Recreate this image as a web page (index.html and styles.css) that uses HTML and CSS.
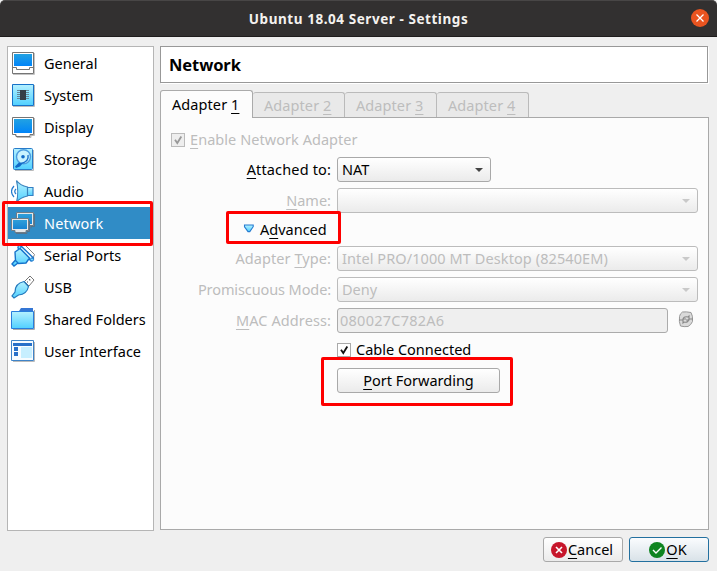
FILE: index.html
```html
<!DOCTYPE html>
<html lang="en">
<head>
<meta charset="utf-8">
<title>Ubuntu 18.04 Server - Settings</title>
<link rel="stylesheet" href="styles.css">
</head>
<body>
<svg class="defs" width="0" height="0" aria-hidden="true">
  <defs>
    <linearGradient id="screen" x1="0" y1="0" x2="0" y2="1"><stop offset="0" stop-color="#22a2e2"/><stop offset="1" stop-color="#0084f8"/></linearGradient>
    <linearGradient id="ice" x1="0" y1="0" x2="0" y2="1"><stop offset="0" stop-color="#b5f1ff"/><stop offset="1" stop-color="#50d0ff"/></linearGradient>
    <linearGradient id="monitor" x1="0" y1="0" x2="0" y2="1"><stop offset="0" stop-color="#2f9fd9"/><stop offset="1" stop-color="#1683d2"/></linearGradient>
  </defs>
</svg>
<div class="window">
  <header class="titlebar">
    <span class="title">Ubuntu 18.04 Server - Settings</span>
    <span class="close"><svg width="18" height="18" viewBox="0 0 18 18"><circle cx="9" cy="9" r="9" fill="#e95420"/><path d="M5.500 5.500l7 7M12.500 5.500l-7 7" stroke="#fff" stroke-width="1.300"/></svg></span>
  </header>
  <div class="content">
    <nav class="sidebar">
      <div class="item general"><svg viewBox="0 0 24 24"><path d="M2 23.500h21.500V2" fill="none" stroke="#c4c4c4"/><path d="M1.500 1.500h21v21h-21z" fill="#fff" stroke="#757575"/><path d="M3 3h18v12H3z" fill="url(#screen)"/><path d="M2 16.500h3.500v2h13v-2H22" fill="none" stroke="#757575"/></svg><span>General</span></div>
      <div class="item system"><svg viewBox="0 0 24 24"><path d="M2 23.500h21.500V2" fill="none" stroke="#bbb"/><path d="M1.500 1.500h21v21h-21z" fill="url(#ice)" stroke="#1672c9"/><path d="M6 7.500h12M6 9.500h12M6 11.500h12M6 13.500h12M6 15.500h12" stroke="#65859a"/><path d="M9 7h6v10H9z" fill="#353d47"/></svg><span>System</span></div>
      <div class="item display"><svg viewBox="0 0 24 24"><path d="M4 20.500h2v2h14v-2h3.500V3" fill="none" stroke="#bbb"/><path d="M1.500 2.500h21v17H19v2H5v-2H1.500z" fill="#fff" stroke="#757575"/><path d="M3 4h18v14H3z" fill="url(#screen)"/></svg><span>Display</span></div>
      <div class="item storage"><svg viewBox="0 0 24 24"><path d="M4 23.500h18.500V3" fill="none" stroke="#bbb"/><rect x="2.500" y="1.500" width="19" height="21" rx="1" fill="url(#ice)" stroke="#287bc9"/><circle cx="12.500" cy="9.800" r="7" fill="#c9f3ff" stroke="#4d9ddf" stroke-width="1.400"/><circle cx="12" cy="9.800" r="1.800" fill="#116ac8"/><path d="M17 8c1 5-3 7.500-7 8.500" fill="none" stroke="#1c73cc" stroke-width="1.400"/><path d="M4 19.500l4-4 3.500 1-2.500 3-4 1.500z" fill="#116ac8"/></svg><span>Storage</span></div>
      <div class="item audio"><svg viewBox="0 0 24 24"><path d="M15 8.500h7v8h-7z" fill="url(#ice)" stroke="#3380c5" stroke-width="1.200"/><path d="M5.500 1.500Q9 6.500 16.500 8v9Q9 18.500 5.500 23.500c1.500-6 1.500-16 0-22z" fill="url(#ice)" stroke="#3b83bd" stroke-width="1.200"/><path d="M3 7Q-2 12.500 3 18M5 10q-2.500 2.500 0 5" fill="none" stroke="#247bcf" stroke-width="1.200"/></svg><span>Audio</span></div>
      <div class="item network selected"><svg viewBox="0 0 24 24"><path d="M23.500 3v12.500H20v2" fill="none" stroke="#55738a"/><path d="M5.500 1.500h17v13H19v2h-8v-2H5.500z" fill="#e4e8ea" stroke="#6f7c86"/><path d="M7 3h14v10H7z" fill="url(#monitor)"/><path d="M18.500 10v10.500H16v2H5" fill="none" stroke="#55738a"/><path d="M.5 7.500h17v12H15v2H4v-2H.5z" fill="#e4e8ea" stroke="#6f7c86"/><path d="M2 9h14v9H2z" fill="url(#monitor)"/></svg><span>Network</span></div>
      <div class="item serial"><svg viewBox="0 0 24 24"><path d="M10 3l3-2 10.500 10.500L22 15z" fill="#fff" stroke="#858585"/><path d="M7 5l2.500-2.500L22.500 15 20 18z" fill="#e8f9ff" stroke="#1673cb" stroke-width="1.300"/><path d="M4 9l5-3.500 9.500 9.500-3.500 5-7.500.5-3-3zM4 17.500L1 21l2 2 4-3" fill="url(#ice)" stroke="#1673cb" stroke-width="1.400"/><circle cx="8.500" cy="4" r="1.600" fill="#73d8ff" stroke="#1673cb"/><circle cx="21" cy="16.500" r="1.600" fill="#73d8ff" stroke="#1673cb"/></svg><span>Serial Ports</span></div>
      <div class="item usb"><svg viewBox="0 0 24 24"><path d="M13.500 6.500l5.500-5.500 4 4-5 6z" fill="#fff" stroke="#777"/><path d="M18 4.500h1v1M16 7h1" stroke="#555"/><path d="M13 6.500l4.500 5c-1 5-4 8-10 8.500L3 23l-2-2 3-4C4 11 8 7.500 13 6.500z" fill="url(#ice)" stroke="#2479bd" stroke-width="1.200"/></svg><span>USB</span></div>
      <div class="item folders"><svg viewBox="0 0 24 24"><path d="M2 22.500h21.500V3" fill="none" stroke="#aaa"/><path d="M8 4l2-3h12v4H8z" fill="#3476d4"/><path d="M.5 4.500h22v17H.5z" fill="url(#ice)" stroke="#287ddc"/></svg><span>Shared Folders</span></div>
      <div class="item interface"><svg viewBox="0 0 24 24"><path d="M2 22.500h21.500V3" fill="none" stroke="#bbb"/><path d="M.5 1.500h22v20H.5z" fill="#f7fcff" stroke="#3f84c8"/><path d="M2 4h19v3H2zM3 8h4v4H3zM3 13h4v4H3z" fill="#2871c9"/><path d="M10 8h11v11H10z" fill="#c7efff"/></svg><span>User Interface</span></div>
    </nav>
    <main class="main">
      <h1>Network</h1>
      <div class="tabs">
        <div class="tab active">Adapter <u>1</u></div>
        <div class="tab">Adapter <u>2</u></div>
        <div class="tab">Adapter <u>3</u></div>
        <div class="tab">Adapter <u>4</u></div>
      </div>
      <section class="pane">
        <div class="enable dim"><span class="check"><svg viewBox="0 0 12 12"><path d="M3 5.700l2.300 3.300L9.300 2.500" fill="none" stroke="#999" stroke-width="1.800"/></svg></span><span class="enable-text"><u>E</u>nable Network Adapter</span></div>
        <div class="form">
          <label class="attached"><u>A</u>ttached to:</label>
          <div class="combo short enabled"><span>NAT</span><i></i></div>
          <label class="dim"><u>N</u>ame:</label>
          <div class="combo dim"><span></span><i></i></div>
          <div class="advanced"><svg width="12" height="10" viewBox="0 0 12 10"><path d="M1.500 1h8.700v1.700L6.800 7.600H5L1.500 2.700z" fill="url(#ice)" stroke="#257ad0" stroke-width="1.100"/></svg><span>A<u>d</u>vanced</span></div>
          <label class="dim type">Adapter <u>T</u>ype:</label>
          <div class="combo dim"><span class="intel">Intel PRO/1000 MT Desktop (82540EM)</span><i></i></div>
          <label class="dim promiscuous">Promiscuous Mode:</label>
          <div class="combo dim"><span>Deny</span><i></i></div>
          <label class="dim mac"><u>M</u>AC Address:</label>
          <div class="address"><div class="input dim">080027C782A6</div><svg width="16" height="17" viewBox="0 0 16 17"><path d="M4.500 1Q8 .5 13 1.500q2 3 1.500 9Q13 14 10 15.500q-4 .5-7.500-.5Q.8 11 1.500 5.500 2 2.500 4.500 1z" fill="#dadada" stroke="#999"/><path d="M1 9h4q0-4 5-3l1-1v4H8M15 8h-4q-1 4-5 3l-1 1V8h3" fill="none" stroke="#888" stroke-width="1.100"/></svg></div>
          <div class="cable"><span class="check on"><svg viewBox="0 0 12 12"><path d="M3 5.700l2.300 3.300L9.300 2.500" fill="none" stroke="#111" stroke-width="1.800"/></svg></span><span><u>C</u>able Connected</span></div>
          <div class="button forward"><span><u>P</u>ort Forwarding</span></div>
        </div>
      </section>
    </main>
  </div>
  <footer class="actions">
    <div class="button cancel"><svg width="16" height="16" viewBox="0 0 16 16"><circle cx="8" cy="8" r="8" fill="#c7162b"/><path d="M5 5l6 6M11 5l-6 6" stroke="#fff" stroke-width="1.600"/></svg><span><u>C</u>ancel</span></div>
    <div class="button ok"><svg width="16" height="16" viewBox="0 0 16 16"><circle cx="8" cy="8" r="8" fill="#0e8420"/><path d="M4 8l3 3 5.500-5.500" fill="none" stroke="#fff" stroke-width="1.400"/></svg><span><u>O</u>K</span></div>
  </footer>
  <div class="mark mark-network"></div>
  <div class="mark mark-advanced"></div>
  <div class="mark mark-forward"></div>
</div>
</body>
</html>
```
FILE: styles.css
```css
* { box-sizing: border-box; }
body { margin: 0; overflow: hidden; background: #efefef; color: #000; font: 14.5px/20px "Noto Sans", sans-serif; white-space: nowrap; }
.defs { position: absolute; }
.window { position: relative; width: 717px; height: 571px; }
u { text-decoration: underline; text-decoration-thickness: 1px; text-underline-offset: 3px; text-decoration-skip-ink: none; }

.titlebar { position: relative; height: 37px; display: flex; justify-content: center; align-items: center; background: #323030; border-top: 1px solid #484646; border-bottom: 1px solid #1e1c1c; border-radius: 5px 5px 0 0; }
.title { color: #f4f2ef; font-weight: 700; font-size: 13.5px; letter-spacing: .56px; }
.close { position: absolute; right: 8px; top: 8px; height: 18px; }
.close svg { display: block; }

.content { display: flex; gap: 6px; padding: 9px 8px 0 7px; height: 494px; }
.sidebar { width: 147px; height: 485px; border: 1px solid #b5b5b5; background: #fff; }
.item { height: 32px; display: flex; align-items: center; padding-left: 3px; gap: 9px; }
.item svg { width: 24px; height: 24px; flex: none; }
.network { letter-spacing: .15px; }
.selected { background: #308cc6; color: #fff; }

.main { width: 549px; display: flex; flex-direction: column; }
h1 { margin: 0; width: 548px; height: 37px; padding: 8px; border: 1px solid #989898; background: #fff; box-shadow: 1px 1px #fff; font-size: 16.5px; line-height: 20px; letter-spacing: -.1px; }
.tabs { display: flex; align-items: flex-end; height: 28px; margin-top: 7px; }
.tab { width: 92px; height: 26px; padding: 2px 0 0 11px; border: 1px solid #bababa; border-bottom-color: #a9a9a9; border-left: 0; border-radius: 3px 3px 0 0; background: #e9e9e9; color: #bdbdbd; letter-spacing: .08px; }
.tab.active { position: relative; width: 93px; height: 28px; padding-top: 3px; border: 1px solid #aaa; border-bottom: 0; background: #fcfcfc; color: #000; }
.pane { margin-top: -1px; height: 413px; border: 1px solid #a9a9a9; background: #fcfcfc; }
.dim { color: #bdbdbd; }
.enable { display: flex; align-items: center; gap: 5px; padding: 11px 0 0 10px; height: 32px; }
.enable-text { margin-top: -2px; letter-spacing: .05px; }
.check { width: 14px; height: 14px; border: 1px solid #bbb; background: #eee; flex: none; }
.check svg { width: 12px; height: 12px; display: block; }
.check.on { background: #fff; border-color: #aaa; }
.form { display: grid; grid-template-columns: 170px 361px; grid-template-rows: 25px 31px 33px 31px 31px 31px 29px 31px; column-gap: 6px; padding-top: 7px; }
.form > * { align-self: start; }
.form > :nth-child(3), .form > :nth-child(4) { margin-top: 6px; }
.form > .advanced { grid-column: 1 / 3; margin: 6px 0 0 82px; display: flex; align-items: center; gap: 5px; height: 20px; }
label { text-align: right; line-height: 25px; }
.attached { letter-spacing: .15px; }
.type { letter-spacing: .08px; }
.promiscuous { letter-spacing: -.1px; }
.mac { letter-spacing: .1px; }
.intel { letter-spacing: .09px; }
.combo, .button { height: 25px; display: flex; align-items: center; border: 1px solid #bcbcbc; border-radius: 3px; background: linear-gradient(#fff, #ebebeb); }
.combo { padding: 0 7px 0 4px; justify-content: space-between; }
.combo span, .button span { margin-top: -2px; }
.combo i { border: 4px solid transparent; border-bottom: 0; border-top-color: #c9c9c9; }
.combo.short { width: 154px; }
.combo.enabled { border-color: #a9a9a9; }
.combo.enabled i { border-top-color: #444; }
.address { display: flex; align-items: center; gap: 10px; }
.address svg { margin-top: -2px; }
.input { width: 331px; height: 25px; line-height: 23px; padding-left: 2px; border: 1px solid #ababab; border-radius: 3px; background: #efefef; letter-spacing: .25px; }
.cable, .forward { grid-column: 2; }
.form > .cable { display: flex; align-items: center; gap: 5px; height: 23px; margin-top: -1px; }
.cable span + span { margin-top: -1px; }
.button { justify-content: center; border-color: #a9a9a9; }
.form > .forward { width: 163px; }

.actions { display: flex; justify-content: flex-end; gap: 6px; padding: 6px 8px 0; }
.cancel, .ok { width: 80px; gap: 1px; }
.cancel { padding-right: 2px; }
.ok { padding-right: 2px; border-color: #23709f; background: linear-gradient(#fafcfe, #d9e2e8); }

.mark { position: absolute; border: 3px solid #fe0000; border-radius: 2px; }
.mark-network { left: 2px; top: 201px; width: 151px; height: 45px; }
.mark-advanced { left: 226px; top: 211px; width: 115px; height: 33px; }
.mark-forward { left: 321px; top: 357px; width: 192px; height: 49px; }
```
